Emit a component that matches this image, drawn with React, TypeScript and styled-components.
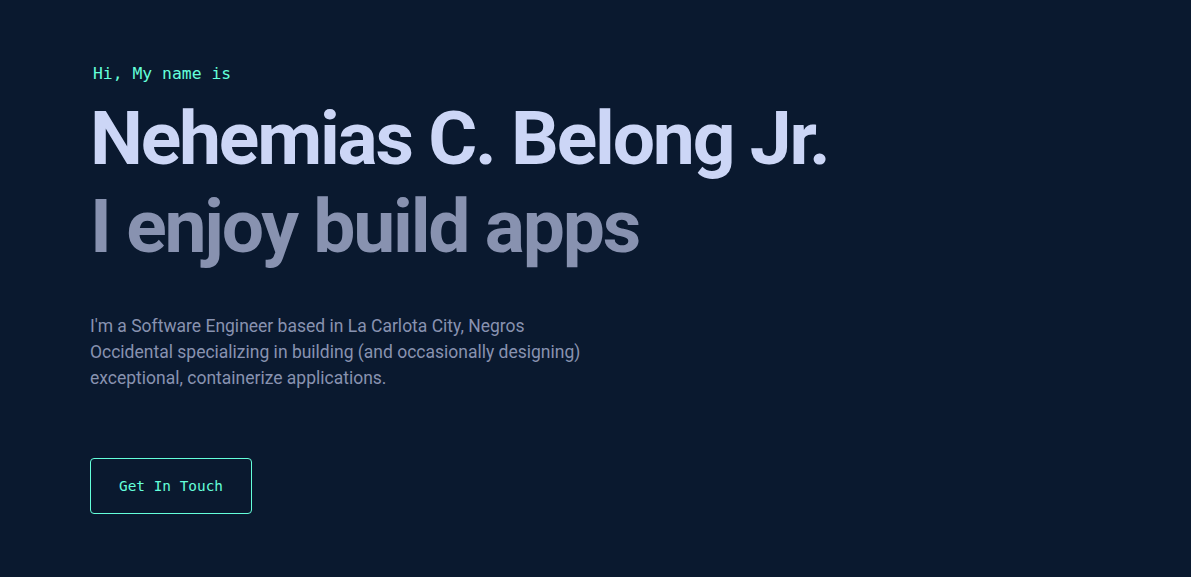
import styled, { createGlobalStyle } from "styled-components";

const GlobalStyle = createGlobalStyle`
  html, body {
    margin: 0;
    padding: 0;
    background-color: #0a192f;
  }
  * {
    box-sizing: border-box;
  }
`;

const Hero = styled.section`
  min-height: 577px;
  height: 100vh;
  padding: 0 90px;
  display: flex;
  flex-direction: column;
  justify-content: center;
  align-items: flex-start;
  font-family: Roboto, "Liberation Sans", sans-serif;
`;

const Intro = styled.h1`
  margin: 0 0 10px 3px;
  color: #64ffda;
  font-family: "DejaVu Sans Mono", "Liberation Mono", monospace;
  font-size: 16.4px;
  font-weight: 400;
  line-height: 20px;
`;

const BigHeading = styled.h2<{ $muted?: boolean }>`
  margin: 0;
  color: ${(props) => (props.$muted ? "#8892b0" : "#ccd6f6")};
  font-size: 75px;
  font-weight: 700;
  letter-spacing: -2.2px;
  line-height: 88px;
`;

const Blurb = styled.p`
  margin: 43px 0 0;
  max-width: 520px;
  color: #8892b0;
  font-size: 17.5px;
  line-height: 26px;
`;

const ContactButton = styled.a`
  margin-top: 67px;
  display: inline-flex;
  align-items: center;
  justify-content: center;
  width: 162px;
  height: 56px;
  border: 1px solid #64ffda;
  border-radius: 4px;
  color: #64ffda;
  font-family: "DejaVu Sans Mono", "Liberation Mono", monospace;
  font-size: 14.4px;
  text-decoration: none;
  cursor: pointer;
`;

export default function App() {
  return (
    <>
      <GlobalStyle />
      <Hero>
        <Intro>Hi, My name is</Intro>
        <BigHeading>Nehemias C. Belong Jr.</BigHeading>
        <BigHeading as="h3" $muted>
          I enjoy build apps
        </BigHeading>
        <Blurb>
          I'm a Software Engineer based in La Carlota City, Negros Occidental
          specializing in building (and occasionally designing) exceptional,
          containerize applications.
        </Blurb>
        <ContactButton href="#contact">Get In Touch</ContactButton>
      </Hero>
    </>
  );
}
